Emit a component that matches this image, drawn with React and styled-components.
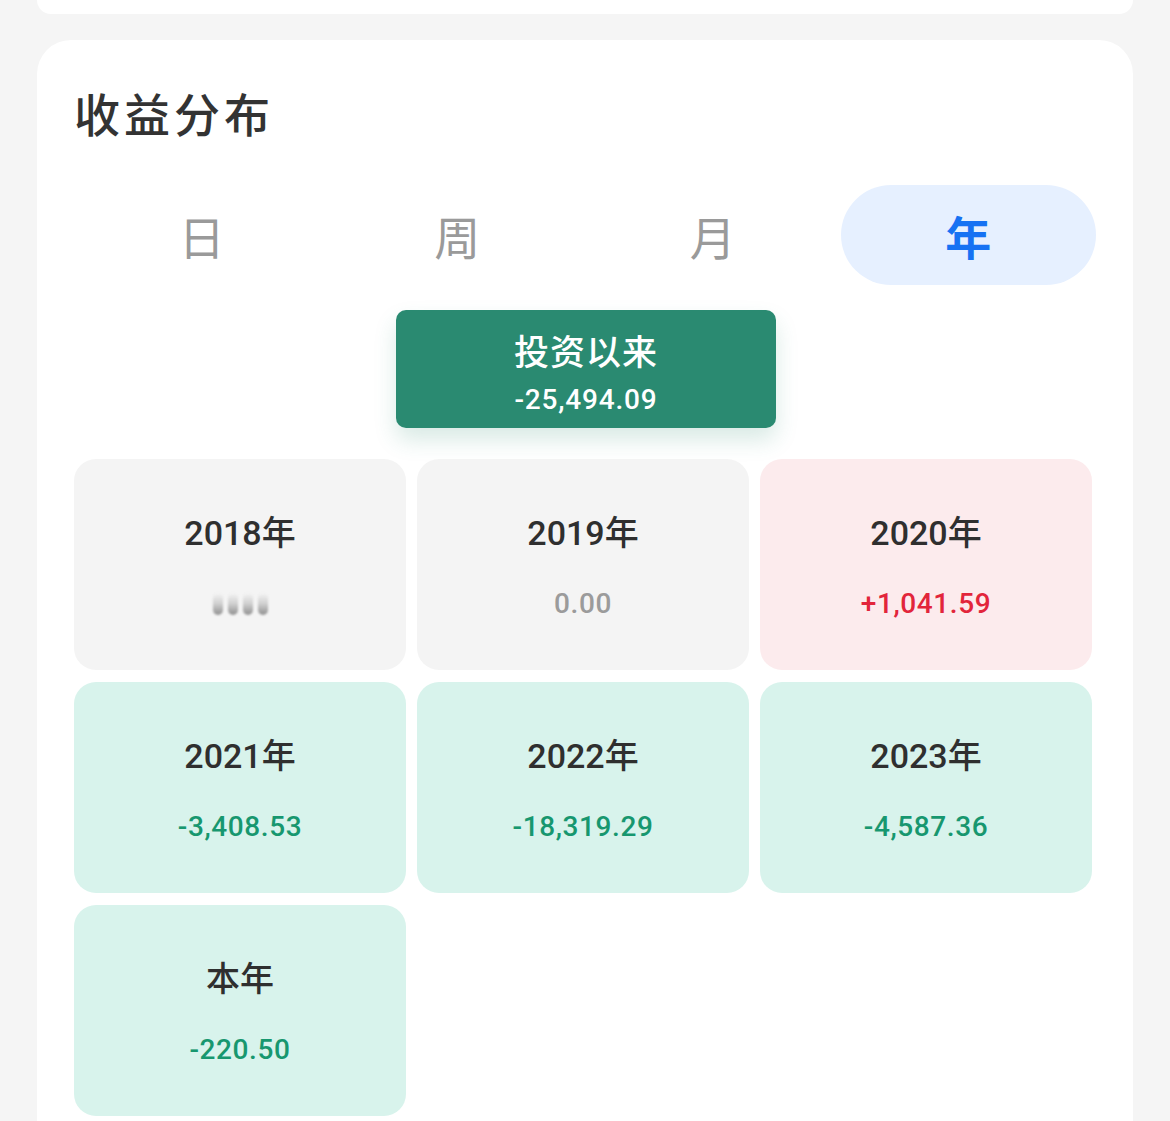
import React, { useState } from "react";
import styled, { createGlobalStyle } from "styled-components";

const GlobalStyle = createGlobalStyle`
  html, body {
    margin: 0;
    padding: 0;
    background: #f5f5f5;
    font-family: Roboto, "Noto Sans CJK SC", "Noto Sans", sans-serif;
  }
`;

const Page = styled.div`
  width: 1170px;
  display: flex;
  flex-direction: column;
  gap: 26px;
  padding: 0 37px;
  box-sizing: border-box;
`;

const TopCard = styled.div`
  height: 14px;
  background: #fff;
  border-radius: 0 0 28px 28px;
`;

const Card = styled.div`
  background: #fff;
  border-radius: 34px 34px 0 0;
  padding: 44px 37px 20px;
  min-height: 1060px;
  box-sizing: border-box;
`;

const Title = styled.h2`
  margin: 0;
  font-family: "Noto Sans CJK SC", sans-serif;
  font-size: 46px;
  font-weight: 500;
  color: #333;
  line-height: 56px;
  letter-spacing: 4px;
`;

const Tabs = styled.div`
  display: grid;
  grid-template-columns: repeat(4, 1fr);
  margin-top: 45px;
  width: 1022px;
`;

const Tab = styled.button`
  border: none;
  height: 100px;
  border-radius: 50px;
  background: ${(p) => (p.$active ? "#e6f0ff" : "transparent")};
  color: ${(p) => (p.$active ? "#1672f3" : "#9a9a9a")};
  font-family: "Noto Sans CJK SC", sans-serif;
  font-size: 46px;
  font-weight: ${(p) => (p.$active ? 700 : 400)};
  cursor: pointer;
  padding: 0;
`;

const SummaryWrap = styled.div`
  display: flex;
  justify-content: center;
  margin: 25px 0 31px;
  padding-left: 2px;
`;

const Summary = styled.div`
  width: 380px;
  height: 118px;
  background: #2a8a71;
  border-radius: 10px;
  box-shadow: 0 12px 22px rgba(42, 138, 113, 0.18);
  display: flex;
  flex-direction: column;
  align-items: center;
  padding-top: 18px;
  box-sizing: border-box;
  color: #fff;
`;

const SummaryLabel = styled.div`
  font-family: "Noto Sans CJK SC", sans-serif;
  font-size: 35px;
  font-weight: 500;
  line-height: 44px;
  letter-spacing: 1px;
`;

const SummaryValue = styled.div`
  font-size: 28px;
  font-weight: 500;
  line-height: 40px;
  margin-top: 8px;
  letter-spacing: 0.8px;
`;

const Grid = styled.div`
  display: grid;
  grid-template-columns: repeat(3, 332px);
  column-gap: 11px;
  row-gap: 12px;
`;

const tones = {
  gray: { bg: "#f4f4f4", fg: "#9b9b9b" },
  red: { bg: "#fcebed", fg: "#e2253b" },
  green: { bg: "#d8f3ec", fg: "#17976f" },
};

const Cell = styled.div`
  height: 211px;
  border-radius: 22px;
  background: ${(p) => tones[p.$tone].bg};
  display: flex;
  flex-direction: column;
  align-items: center;
  padding-top: 52px;
  box-sizing: border-box;
`;

const Year = styled.div`
  font-size: 34px;
  font-weight: 500;
  color: #2f2f2f;
  line-height: 44px;
`;

const Value = styled.div`
  margin-top: 31px;
  font-size: 28px;
  font-weight: 500;
  line-height: 36px;
  color: ${(p) => tones[p.$tone].fg};
  letter-spacing: 0.6px;
`;

const Hidden = styled.div`
  margin-top: 31px;
  height: 36px;
  display: flex;
  align-items: center;
  gap: 5px;
`;

const Bar = styled.span`
  width: 10px;
  height: 22px;
  border-radius: 5px;
  background: linear-gradient(180deg, #f4f4f4 0%, #cfcfcf 50%, #8f8f8f 100%);
  filter: blur(0.8px);
`;

const tabs = ["日", "周", "月", "年"];

const years = [
  { label: "2018年", tone: "gray", hidden: true },
  { label: "2019年", tone: "gray", value: "0.00" },
  { label: "2020年", tone: "red", value: "+1,041.59" },
  { label: "2021年", tone: "green", value: "-3,408.53" },
  { label: "2022年", tone: "green", value: "-18,319.29" },
  { label: "2023年", tone: "green", value: "-4,587.36" },
  { label: "本年", tone: "green", value: "-220.50" },
];

export default function App() {
  const [active, setActive] = useState(3);
  return (
    <>
      <GlobalStyle />
      <Page>
        <TopCard />
        <Card>
          <Title>收益分布</Title>
          <Tabs>
            {tabs.map((t, i) => (
              <Tab key={t} $active={i === active} onClick={() => setActive(i)}>
                {t}
              </Tab>
            ))}
          </Tabs>
          <SummaryWrap>
            <Summary>
              <SummaryLabel>投资以来</SummaryLabel>
              <SummaryValue>-25,494.09</SummaryValue>
            </Summary>
          </SummaryWrap>
          <Grid>
            {years.map((y) => (
              <Cell key={y.label} $tone={y.tone}>
                <Year>{y.label}</Year>
                {y.hidden ? (
                  <Hidden>
                    <Bar />
                    <Bar />
                    <Bar />
                    <Bar />
                  </Hidden>
                ) : (
                  <Value $tone={y.tone}>{y.value}</Value>
                )}
              </Cell>
            ))}
          </Grid>
        </Card>
      </Page>
    </>
  );
}
